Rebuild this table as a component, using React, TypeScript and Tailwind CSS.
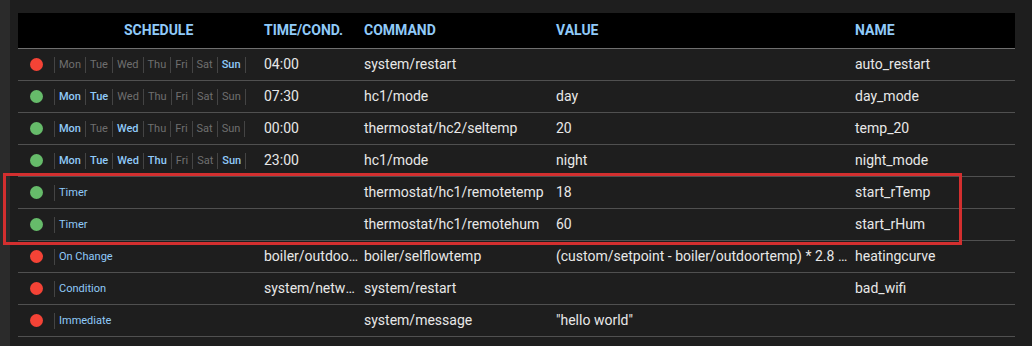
import React from "react";

type Row = {
  on: boolean;
  days?: string[];
  label?: string;
  time: string;
  cmd: string;
  value: string;
  name: string;
};

const DAYS = ["Mon", "Tue", "Wed", "Thu", "Fri", "Sat", "Sun"];

const rows: Row[] = [
  { on: false, days: ["Sun"], time: "04:00", cmd: "system/restart", value: "", name: "auto_restart" },
  { on: true, days: ["Mon", "Tue"], time: "07:30", cmd: "hc1/mode", value: "day", name: "day_mode" },
  { on: true, days: ["Mon", "Wed"], time: "00:00", cmd: "thermostat/hc2/seltemp", value: "20", name: "temp_20" },
  { on: true, days: ["Mon", "Tue", "Wed", "Thu", "Sun"], time: "23:00", cmd: "hc1/mode", value: "night", name: "night_mode" },
  { on: true, label: "Timer", time: "", cmd: "thermostat/hc1/remotetemp", value: "18", name: "start_rTemp" },
  { on: true, label: "Timer", time: "", cmd: "thermostat/hc1/remotehum", value: "60", name: "start_rHum" },
  {
    on: false,
    label: "On Change",
    time: "boiler/outdoortemp",
    cmd: "boiler/selflowtemp",
    value: "(custom/setpoint - boiler/outdoortemp) * 2.8 + 3",
    name: "heatingcurve",
  },
  { on: false, label: "Condition", time: "system/network/rssi < -80", cmd: "system/restart", value: "", name: "bad_wifi" },
  { on: false, label: "Immediate", time: "", cmd: "system/message", value: '"hello world"', name: "" },
];

const grid = "grid grid-cols-[242px_100px_192px_299px_1fr]";

export default function App() {
  return (
    <div
      className="flex w-[1032px] h-[346px] overflow-hidden bg-[#1e1e1e]"
      style={{ fontFamily: "Roboto, 'Liberation Sans', sans-serif" }}
    >
      <div className="w-[10px] shrink-0 bg-[#2b2b2b]" />
      <div className="relative flex-1 pl-2 pr-[17px] pt-[13px]">
        <div className="w-[997px]">
          {/* header */}
          <div className={`${grid} h-[36px] items-center bg-black border-b border-[#6f6f6f] text-[14px] font-bold text-[#90caf9]`}>
            <div className="pl-[106px]">SCHEDULE</div>
            <div className="pl-1">TIME/COND.</div>
            <div className="pl-1">COMMAND</div>
            <div className="pl-1">VALUE</div>
            <div className="pl-1">NAME</div>
          </div>
          {rows.map((r, i) => (
            <div
              key={i}
              className={`${grid} h-[32px] items-center border-b border-[#505050] text-[14px] text-[#e8e8e8]`}
            >
              <div className="flex items-center h-full">
                <div className="w-[36px] flex justify-center">
                  <span
                    className={`block w-[13px] h-[13px] rounded-full ${r.on ? "bg-[#66bb6a]" : "bg-[#f44336]"}`}
                  />
                </div>
                <div className="flex items-center h-[16px] border-l border-[#444]">
                  {r.days ? (
                    DAYS.map((d) => (
                      <span
                        key={d}
                        className={`px-1 h-[16px] leading-[16px] text-[11px] border-r border-[#444] ${
                          r.days!.includes(d) ? "text-[#90caf9] font-medium" : "text-[#6f6f6f]"
                        }`}
                      >
                        {d}
                      </span>
                    ))
                  ) : (
                    <span className="pl-1 text-[11px] leading-[16px] text-[#90caf9]">{r.label}</span>
                  )}
                </div>
              </div>
              <div className="pl-1 truncate">{r.time}</div>
              <div className="pl-1 truncate">{r.cmd}</div>
              <div className="pl-1 truncate">{r.value}</div>
              <div className="pl-1 truncate">{r.name}</div>
            </div>
          ))}
        </div>
        <div className="absolute left-[-7px] top-[173px] w-[959px] h-[72px] border-[3px] border-[#d32f2f] pointer-events-none" />
      </div>
    </div>
  );
}
